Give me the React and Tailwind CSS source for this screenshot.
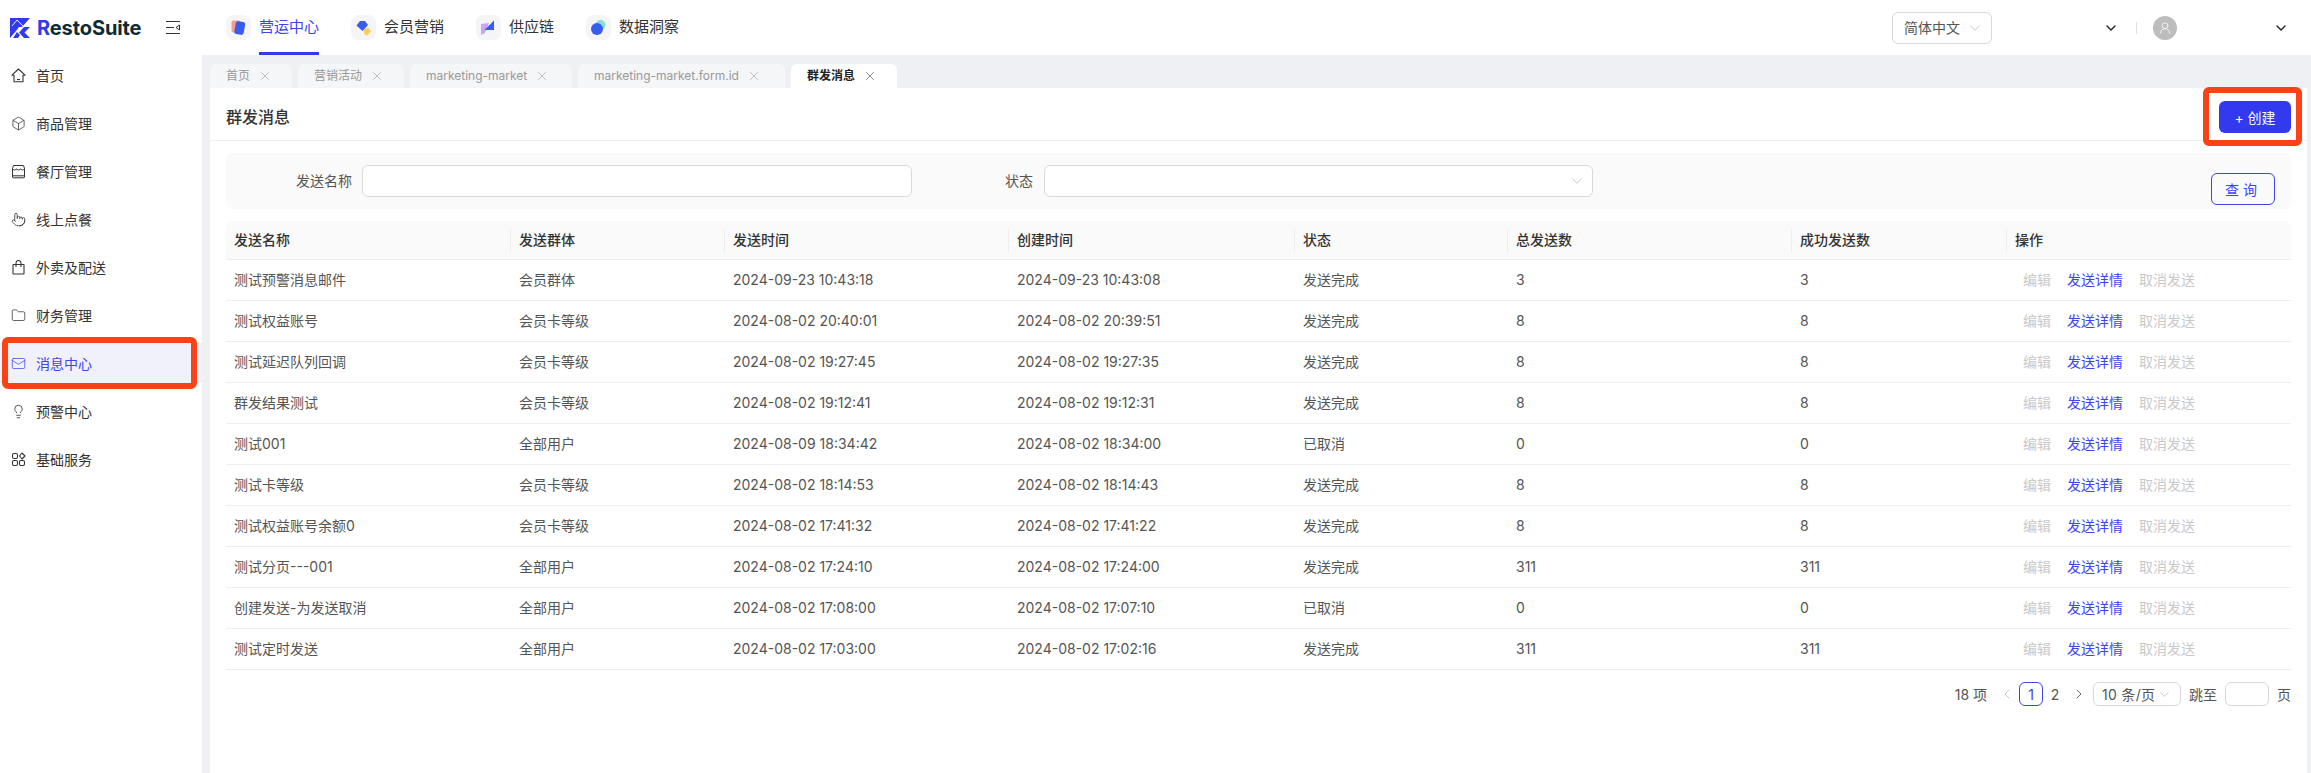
import React from "react";
import { Box, Pointer, Folder, Mail, Lightbulb, X, ChevronDown, ChevronLeft, ChevronRight, UserRound } from "lucide-react";

function HomeIcon() {
  return (
    <svg width="15" height="15" viewBox="0 0 15 15" fill="none" stroke="#333" strokeWidth="1.1" strokeLinejoin="round">
      <path d="M1 7.200 7.500 1 14 7.200h-2v6.600H3V7.200z" />
      <path d="M6 11.500h3" />
    </svg>
  );
}
function StoreIcon() {
  return (
    <svg width="15" height="15" viewBox="0 0 15 15" fill="none" stroke="#333" strokeWidth="1" strokeLinejoin="round">
      <path d="M2.500 1.500h10l1 3v8.500a.8.800 0 0 1-.8.800H2.300a.8.800 0 0 1-.8-.800V4.500z" />
      <path d="M1.500 4.500c.8 2 3 2 3.600.3.700 1.500 4 1.500 4.800 0 .6 1.700 2.800 1.700 3.600-.3" />
      <path d="M1.500 11.800h12" />
    </svg>
  );
}
function BagIcon() {
  return (
    <svg width="15" height="15" viewBox="0 0 15 15" fill="none" stroke="#333" strokeWidth="1.1" strokeLinejoin="round">
      <rect x="2" y="4.500" width="11" height="9.500" rx="0.600" />
      <path d="M5 7V3a2.500 2.500 0 0 1 5 0v4" />
    </svg>
  );
}
function GridIcon() {
  return (
    <svg width="15" height="15" viewBox="0 0 15 15" fill="none" stroke="#333" strokeWidth="1.1">
      <rect x="1.500" y="1.500" width="5" height="5" rx="1.400" />
      <path d="M11 1 14 4 11 7 8.500 4z" strokeLinejoin="round" />
      <rect x="1.500" y="8.500" width="5" height="5" rx="1.400" />
      <rect x="8.500" y="8.500" width="5" height="5" rx="1.400" />
    </svg>
  );
}

const menu = [
  { label: "首页", icon: <HomeIcon /> },
  { label: "商品管理", icon: <Box size={15} strokeWidth={1.2} color="#333" /> },
  { label: "餐厅管理", icon: <StoreIcon /> },
  { label: "线上点餐", icon: <Pointer size={15} strokeWidth={1.3} color="#333" /> },
  { label: "外卖及配送", icon: <BagIcon /> },
  { label: "财务管理", icon: <Folder size={15} strokeWidth={1.2} color="#333" /> },
  { label: "消息中心", icon: <Mail size={15} strokeWidth={1.2} color="#3d44f0" />, active: true },
  { label: "预警中心", icon: <Lightbulb size={15} strokeWidth={1.3} color="#333" /> },
  { label: "基础服务", icon: <GridIcon /> },
];

const rows = [
  ["测试预警消息邮件", "会员群体", "2024-09-23 10:43:18", "2024-09-23 10:43:08", "发送完成", "3", "3"],
  ["测试权益账号", "会员卡等级", "2024-08-02 20:40:01", "2024-08-02 20:39:51", "发送完成", "8", "8"],
  ["测试延迟队列回调", "会员卡等级", "2024-08-02 19:27:45", "2024-08-02 19:27:35", "发送完成", "8", "8"],
  ["群发结果测试", "会员卡等级", "2024-08-02 19:12:41", "2024-08-02 19:12:31", "发送完成", "8", "8"],
  ["测试001", "全部用户", "2024-08-09 18:34:42", "2024-08-02 18:34:00", "已取消", "0", "0"],
  ["测试卡等级", "会员卡等级", "2024-08-02 18:14:53", "2024-08-02 18:14:43", "发送完成", "8", "8"],
  ["测试权益账号余额0", "会员卡等级", "2024-08-02 17:41:32", "2024-08-02 17:41:22", "发送完成", "8", "8"],
  ["测试分页---001", "全部用户", "2024-08-02 17:24:10", "2024-08-02 17:24:00", "发送完成", "311", "311"],
  ["创建发送-为发送取消", "全部用户", "2024-08-02 17:08:00", "2024-08-02 17:07:10", "已取消", "0", "0"],
  ["测试定时发送", "全部用户", "2024-08-02 17:03:00", "2024-08-02 17:02:16", "发送完成", "311", "311"],
];

const heads = ["发送名称", "发送群体", "发送时间", "创建时间", "状态", "总发送数", "成功发送数", "操作"];
const widths = [285, 214, 284, 286, 213, 284, 215, 284];

const tabs = [
  { label: "首页", w: "w-[82px]" },
  { label: "营销活动", w: "w-[106px]" },
  { label: "marketing-market", w: "w-[162px]" },
  { label: "marketing-market.form.id", w: "w-[207px]" },
  { label: "群发消息", w: "w-[106px]", active: true },
];

function NavTile({ children }) {
  return (
    <span className="flex h-[25px] w-[25px] items-center justify-center rounded-lg bg-[#f5f5f6]">
      <svg width="17" height="17" viewBox="0 0 17 17">{children}</svg>
    </span>
  );
}

function NavItem({ tile, label, active, className }) {
  return (
    <div className={`flex h-full items-center gap-2 ${className}`}>
      {tile}
      <span className={`flex h-full items-center border-b-[3px] pt-[3px] text-[15px] ${active ? "border-[#3339ee] text-[#3d44f0]" : "border-transparent text-[#333]"}`}>
        {label}
      </span>
    </div>
  );
}

export default function App() {
  return (
    <div className="flex h-screen w-full flex-col overflow-hidden bg-white font-['Inter','Noto_Sans_CJK_SC',sans-serif] text-[14px] text-[#555]">
      <header className="flex h-[55px] shrink-0 items-center">
        <div className="flex w-[226px] shrink-0 items-center pl-[10px]">
          <svg width="20" height="20" viewBox="0 0 20 20" className="shrink-0">
            <path d="M0 0h20l-8 9-3 0-3 4-6 7z" fill="#3339ee" />
            <path d="M0 20V9l5-5 3-4h3L5 7l2 3-4 5-3 5z" fill="#3339ee" />
            <path d="M2 8l5-6M7 2l6 6" stroke="#fff" strokeWidth="0.9" fill="none" />
            <path d="M9 14.500 14 9h6l-5.500 5.500L20 20h-6z" fill="#3339ee" />
            <path d="M3 20l4-6 3 3-2 3z" fill="#3339ee" />
          </svg>
          <span className="ml-[7px] text-[20px] leading-none font-bold tracking-[-0.1px] text-[#0f2a33]">
            <span className="text-[#3339ee]">R</span>estoSuite
          </span>
          <svg width="14" height="13" viewBox="0 0 14 13" className="ml-[25px] shrink-0" fill="none" stroke="#333" strokeWidth="1">
            <path d="M0 .5h14M0 6.500h8M0 12.500h14M13.500 4v5L10 6.500z" />
          </svg>
        </div>
        <nav className="flex h-full items-center">
          <NavItem
            active
            label="营运中心"
            className="w-[125px]"
            tile={
              <NavTile>
                <rect x="1.500" y="1.500" width="9" height="12" rx="2" fill="#f79c8d" />
                <rect x="5" y="2.500" width="9.500" height="13" rx="2.500" fill="#3a5cec" transform="rotate(10 9.500 9)" />
              </NavTile>
            }
          />
          <NavItem
            label="会员营销"
            className="w-[125px]"
            tile={
              <NavTile>
                <path d="M8 10l5-1.500 3 3.500-3.500 4.500-3-1z" fill="#fdcd5f" />
                <path d="M5 2h5l3 4-5.500 6L1.500 6.500z" fill="#3a5cec" />
              </NavTile>
            }
          />
          <NavItem
            label="供应链"
            className="w-[110px]"
            tile={
              <NavTile>
                <path d="M1 5l8-1-4 10-4 2z" fill="#c8a7f3" />
                <path d="M14 1.500V11H4.500z" fill="#3a5cec" />
              </NavTile>
            }
          />
          <NavItem
            label="数据洞察"
            className="w-[93px]"
            tile={
              <NavTile>
                <circle cx="10.500" cy="6" r="5" fill="#85dfd6" />
                <circle cx="7" cy="10" r="6" fill="#3a5cec" />
              </NavTile>
            }
          />
        </nav>
        <div className="ml-auto flex items-center text-[#333]">
          <div className="flex h-8 w-[100px] items-center justify-between rounded-md border border-[#d9d9d9] pr-[7px] pl-[11px]">
            <span className="text-[14px] text-[#555]">简体中文</span>
            <ChevronDown size={18} strokeWidth={0.9} color="#aaa" />
          </div>
          <ChevronDown size={16} strokeWidth={2} color="#222" className="ml-[111px]" />
          <span className="ml-[17px] h-3 w-px bg-[#e0e0e0]" />
          <span className="ml-4 flex h-6 w-6 items-center justify-center rounded-full bg-[#bdbdbd]">
            <UserRound size={14} strokeWidth={1.3} color="#fff" />
          </span>
          <ChevronDown size={16} strokeWidth={2} color="#222" className="mr-[22px] ml-[96px]" />
        </div>
      </header>

      <div className="flex min-h-0 flex-1">
        <aside className="flex w-[202px] shrink-0 flex-col gap-2">
          {menu.map((m) => (
            <div
              key={m.label}
              className={`relative flex h-10 items-center gap-[10px] pl-[11px] ${m.active ? "bg-[#f1f1fb] text-[#3d44f0]" : "text-[#333]"}`}
            >
              {m.icon}
              <span>{m.label}</span>
              {m.active && (
                <span className="absolute top-[-6px] right-[5px] bottom-[-6px] left-[2px] rounded-[6px] border-[6px] border-[#fb4216]" />
              )}
            </div>
          ))}
        </aside>

        <main className="flex min-w-0 flex-1 flex-col bg-[#eef0f4] pr-1 pl-2">
          <div className="flex h-[33px] shrink-0 items-end gap-[6px]">
            {tabs.map((t) => (
              <div
                key={t.label}
                className={`flex h-6 items-center gap-2 rounded-t-md pl-4 text-[12px] ${t.w} ${t.active ? "bg-white font-semibold text-[#222]" : "bg-[#f5f6f8] text-[#999]"}`}
              >
                <span>{t.label}</span>
                <X size={14} strokeWidth={1} color={t.active ? "#333" : "#999"} />
              </div>
            ))}
          </div>

          <div className="relative min-h-0 flex-1 bg-white">
            <div className="flex h-[53px] items-center justify-between border-b border-[#eeeeee] px-4 pt-[6px]">
              <h1 className="text-[16px] font-medium text-[#333]">群发消息</h1>
              <button className="relative flex h-8 w-[72px] items-center justify-center rounded-md bg-[#3339ee] text-[14px] text-white">
                + 创建
                <span className="absolute top-[-14px] right-[-11px] bottom-[-13px] left-[-16px] rounded-[6px] border-[6px] border-[#fb4216]" />
              </button>
            </div>

            <div className="px-4 pt-3">
              <div className="flex h-14 items-center rounded-md bg-[#fafafa] text-[#555]">
                <span className="ml-[70px] w-[57px] pb-[2px]">发送名称</span>
                <div className="ml-[9px] h-8 w-[550px] rounded-md border border-[#d9d9d9] bg-white" />
                <span className="ml-[93px] w-[28px] pb-[2px]">状态</span>
                <div className="ml-[11px] flex h-8 w-[549px] items-center justify-end rounded-md border border-[#d9d9d9] bg-white pr-[6px]">
                  <ChevronDown size={18} strokeWidth={0.9} color="#aaa" />
                </div>
                <button className="ml-[618px] flex h-8 w-16 translate-y-2 items-center justify-center rounded-md border border-[#3d44f0] text-[14px] tracking-[4px] text-[#3d44f0]">
                  查询
                </button>
              </div>

              <table className="mt-3 w-full table-fixed border-separate border-spacing-0 text-left">
                <colgroup>
                  {widths.map((w, i) => (
                    <col key={i} style={{ width: w }} />
                  ))}
                </colgroup>
                <thead>
                  <tr>
                    {heads.map((h, i) => (
                      <th
                        key={h}
                        className={`h-[39px] border-b border-[#eeeeee] bg-[#fafafa] p-0 font-medium text-[#333] ${i === 0 ? "rounded-tl-md" : ""} ${i === 7 ? "rounded-tr-md" : ""}`}
                      >
                        <div className={`flex h-[23px] items-center px-2 pb-[2px] ${i === 7 ? "" : "border-r border-[#eeeeee]"}`}>{h}</div>
                      </th>
                    ))}
                  </tr>
                </thead>
                <tbody>
                  {rows.map((r) => (
                    <tr key={r[0]}>
                      {r.map((c, i) => (
                        <td key={i} className="h-[41px] border-b border-[#eeeeee] px-2 pb-[2px] text-[#555]">
                          {c}
                        </td>
                      ))}
                      <td className="h-[41px] border-b border-[#eeeeee] px-2 pb-[2px]">
                        <div className="flex gap-4 pl-2">
                          <span className="text-[#c9c9c9]">编辑</span>
                          <span className="text-[#3d44f0]">发送详情</span>
                          <span className="text-[#c9c9c9]">取消发送</span>
                        </div>
                      </td>
                    </tr>
                  ))}
                </tbody>
              </table>

              <div className="mt-3 flex h-6 items-center justify-end text-[14px] text-[#555]">
                <span>18 项</span>
                <ChevronLeft size={16} strokeWidth={1.2} color="#bbb" className="ml-[12px]" />
                <span className="ml-[4px] flex h-6 w-6 items-center justify-center rounded-md border border-[#3d44f0] text-[#3d44f0]">1</span>
                <span className="flex h-6 w-6 items-center justify-center">2</span>
                <ChevronRight size={16} strokeWidth={1.2} color="#444" className="ml-[4px]" />
                <div className="ml-[6px] flex h-6 w-[88px] items-center justify-between rounded-md border border-[#d9d9d9] pr-[8px] pl-2">
                  <span className="tracking-[0.3px]">10 条/页</span>
                  <ChevronDown size={15} strokeWidth={1} color="#aaa" />
                </div>
                <span className="ml-2">跳至</span>
                <div className="ml-2 h-6 w-[44px] rounded-md border border-[#d9d9d9]" />
                <span className="ml-2">页</span>
              </div>
            </div>
          </div>
        </main>
      </div>
    </div>
  );
}
